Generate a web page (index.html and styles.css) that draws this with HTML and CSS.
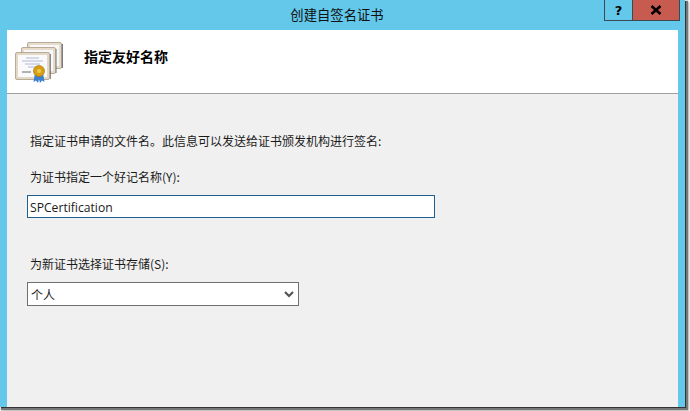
FILE: index.html
```html
<!DOCTYPE html>
<html lang="zh">
<head>
<meta charset="utf-8">
<title>创建自签名证书</title>
<link rel="stylesheet" href="styles.css">
</head>
<body>
<div class="window">
  <div class="titlebar">
    <span class="title">创建自签名证书</span>
    <div class="controls">
      <span class="ctl help">?</span>
      <span class="ctl close"><svg width="12" height="10" viewBox="0 0 12 10"><path d="M1.500 1 L10.500 9 M10.500 1 L1.500 9" stroke="#000" stroke-width="2.600" fill="none"/></svg></span>
    </div>
  </div>
  <div class="client">
    <header class="head">
      <svg class="cert" width="50" height="44" viewBox="0 0 50 44">
        <path d="M48 3 v24 h-2 v-24z" fill="#4a5060" opacity=".75"/>
        <rect x="12.500" y="1.500" width="34" height="26" rx="1.500" fill="#e6dcc9" stroke="#a89c88" stroke-width=".8"/>
        <rect x="15" y="4" width="29" height="21" fill="#f8f8fa"/>
        <path d="M41.500 8 v24 h-1.500 v-24z" fill="#3c4250" opacity=".75"/>
        <rect x="6.500" y="6.500" width="34" height="26" rx="1.500" fill="#e6dcc9" stroke="#a89c88" stroke-width=".8"/>
        <rect x="9" y="9" width="29" height="21" fill="#f8f8fa"/>
        <path d="M36 13 v25 h-1 v-25z" fill="#3c4250" opacity=".6"/>
        <rect x="0.500" y="11.500" width="34" height="27" rx="1.500" fill="#e3d8c3" stroke="#a89c88" stroke-width=".8"/>
        <rect x="3" y="14" width="29" height="22" fill="#fafafd"/>
        <path d="M11 17h13M7 20h21M10 23h15M13 26h9" stroke="#a9b0cc" stroke-width=".9" fill="none"/>
        <path d="M7 31h9" stroke="#8a8a8a" stroke-width="1.300" fill="none"/>
        <path d="M20 32 l-1.500 9 2.500 -1.500 2 2.500 1 -4 1 4 2 -2.500 2.500 1.500 -1.500 -9z" fill="#3a7fd0"/>
        <circle cx="24" cy="30" r="5.500" fill="#d99f10" stroke="#a87a0a" stroke-width=".7"/>
        <circle cx="24" cy="30" r="2.600" fill="#f0c845" stroke="#b98b14" stroke-width=".5"/>
      </svg>
      <h1 class="heading">指定友好名称</h1>
    </header>
    <main class="form">
      <p class="intro">指定证书申请的文件名。此信息可以发送给证书颁发机构进行签名:</p>
      <label class="lbl-name" for="name">为证书指定一个好记名称(Y):</label>
      <input class="name-input" id="name" type="text" value="SPCertification">
      <label class="lbl-store" for="store">为新证书选择证书存储(S):</label>
      <div class="select">
        <span id="store">个人</span>
        <svg width="10" height="7" viewBox="0 0 10 7"><path d="M1 1 L5 5 L9 1" stroke="#555" stroke-width="2.200" fill="none"/></svg>
      </div>
    </main>
  </div>
</div>
</body>
</html>
```
FILE: styles.css
```css
html, body {
  margin: 0;
  padding: 0;
  width: 690px;
  height: 411px;
  overflow: hidden;
  background: #fff;
}
body {
  font-family: "Noto Sans CJK SC", "Liberation Sans", sans-serif;
  font-size: 12px;
  color: #1a1a1a;
}
.window {
  width: 685px;
  height: 407px;
  background: #63c8ea;
  box-shadow: 1px 1px 0 #333, 2px 2px 1px 1px #777, 3px 3px 3px 1px #bbb;
  display: flex;
  flex-direction: column;
  box-sizing: border-box;
  padding: 0 7px;
}
.titlebar {
  height: 30px;
  flex: none;
  position: relative;
  display: flex;
  justify-content: center;
  align-items: flex-start;
  padding-right: 11px;
}
.title {
  font-size: 13.330px;
  line-height: 30px;
  color: #111;
}
.controls {
  position: absolute;
  top: 0;
  right: -2px;
  display: flex;
  height: 21px;
  border: 1px solid #3c4a52;
  border-top: 0;
  box-sizing: border-box;
}
.ctl {
  display: flex;
  align-items: center;
  justify-content: center;
}
.help {
  width: 27px;
  border-right: 1px solid #3c4a52;
  font-family: "DejaVu Sans", sans-serif;
  font-weight: 700;
  font-size: 13px;
  color: #000;
}
.close {
  width: 46px;
  background: #c75b50;
}
.client {
  flex: 1;
  background: #f0f0f0;
  display: flex;
  flex-direction: column;
  min-height: 0;
}
.head {
  height: 63px;
  flex: none;
  background: #fff;
  border-bottom: 1px solid #a0a0a0;
  display: flex;
  align-items: flex-start;
  padding-left: 8px;
}
.cert {
  margin-top: 11px;
}
.heading {
  margin: 17px 0 0 19px;
  font-size: 14px;
  line-height: 18px;
  font-weight: 700;
  color: #000;
}
.form {
  padding-left: 20px;
  display: flex;
  flex-direction: column;
  align-items: flex-start;
}
.intro {
  margin: 38px 0 0 3px;
  line-height: 18px;
}
.lbl-name {
  margin: 18px 0 0 3px;
  line-height: 18px;
}
.name-input {
  margin: 9px 0 0;
  width: 408px;
  height: 23px;
  box-sizing: border-box;
  border: 1px solid #1f5f8f;
  outline: 0;
  padding: 1px 2px 0;
  font: 12.150px "Open Sans", "Liberation Sans", sans-serif;
  color: #1a1a1a;
  background: #fff;
}
.lbl-store {
  margin: 37px 0 0 3px;
  line-height: 18px;
}
.select {
  margin-top: 9px;
  width: 272px;
  height: 24px;
  box-sizing: border-box;
  border: 1px solid #6f6f6f;
  background: #fff;
  display: flex;
  align-items: center;
  justify-content: space-between;
  padding: 0 4px 0 3px;
}
```
